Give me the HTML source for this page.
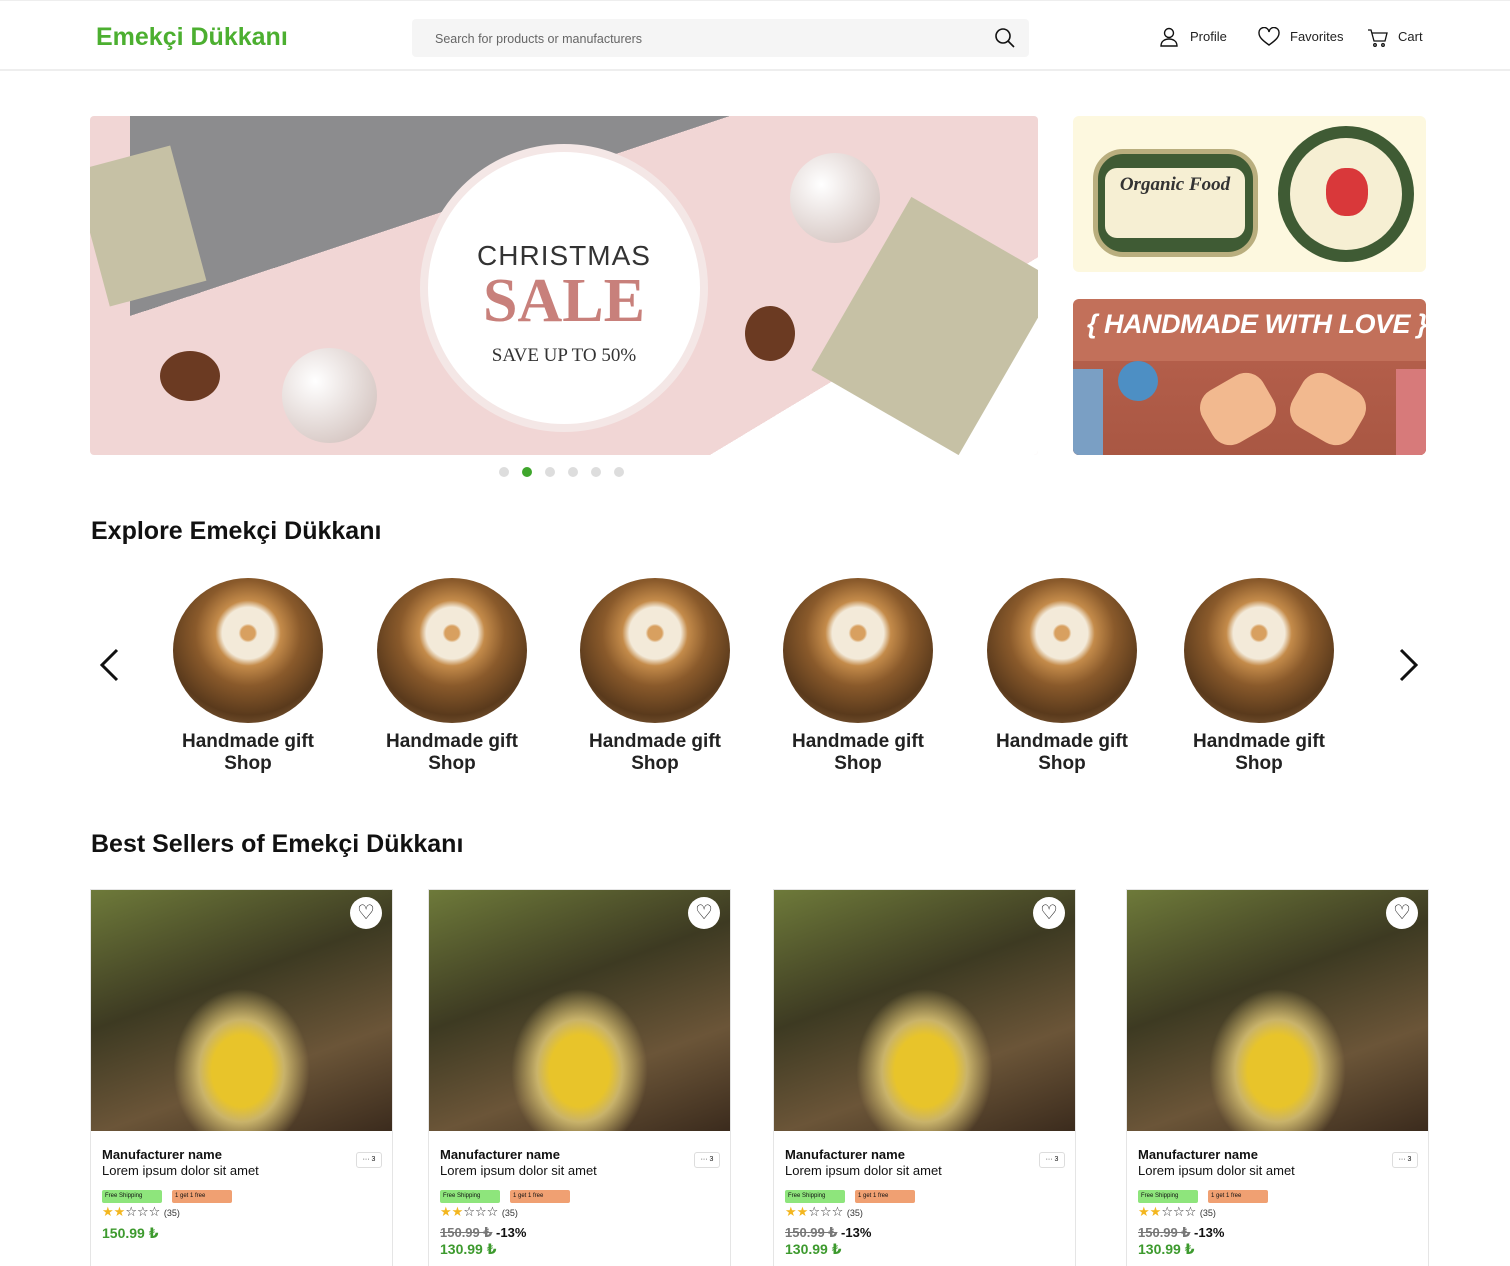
<!DOCTYPE html>
<html><head><meta charset="utf-8"><style>
*{box-sizing:border-box;margin:0;padding:0}
body{width:1510px;height:1266px;overflow:hidden;background:#fff;font-family:"Liberation Sans","DejaVu Sans",sans-serif;color:#111;position:relative}
.hdr{position:absolute;top:0;left:0;width:1510px;height:71px;border-top:1px solid #eee;border-bottom:2px solid #eee}
.logo{position:absolute;left:96px;top:22px;font-size:25px;font-weight:bold;color:#4caf30}
.search{position:absolute;left:412px;top:18px;width:617px;height:38px;background:#f5f5f5;border-radius:4px}
.search span{position:absolute;left:23px;top:13px;font-size:12.5px;color:#666}
.nav{position:absolute;top:28px;font-size:13px;color:#222}
.banner{position:absolute;left:90px;top:116px;width:948px;height:339px;background:#f1d6d5;overflow:hidden;border-radius:4px}
.circ{position:absolute;left:330px;top:28px;width:288px;height:288px;border-radius:50%;background:#fff;border:8px solid #f4e7e6}
.side1{position:absolute;left:1073px;top:116px;width:353px;height:156px;background:#fdf8df;border-radius:6px}
.side2{position:absolute;left:1073px;top:299px;width:353px;height:156px;background:#c2705a;border-radius:6px;overflow:hidden}
.dots{position:absolute;top:464px;left:499px}
.dots i{display:inline-block;width:10px;height:10px;border-radius:50%;background:#ddd;margin-right:13px}
h2{position:absolute;left:91px;font-size:25px;font-weight:bold}
.cat{position:absolute;top:578px;width:150px;text-align:center}
.cat .img{width:150px;height:145px;border-radius:50%;background:radial-gradient(circle at 50% 38%,#d8a060 0 6%,#f3ead9 8% 22%,#c48b4a 28%,#8a5a2b 45%,#5a3a1c 70%,#a27a4f 100%)}
.cat p{font-size:19px;font-weight:bold;line-height:22px;margin-top:8px;color:#222;margin-left:-20px;margin-right:-20px}
.card{position:absolute;top:889px;width:303px;height:377px;border:1px solid #e5e5e5;border-bottom:none;overflow:hidden}
.card .img{height:241px;background:radial-gradient(ellipse at 50% 75%,#e8c42a 0 14%,#c9b36a 20%,transparent 32%),linear-gradient(160deg,#6e7a3a,#3d3a22 40%,#6b5538 70%,#3b2b1d)}
.heart{position:absolute;top:7px;right:10px;width:32px;height:32px;border-radius:50%;background:#fff;text-align:center;font-size:20px;line-height:32px}
.info{padding:16px 11px;font-size:13px;line-height:16px}
.tags{margin-top:6px;height:14px}
.tag{display:inline-block;font-size:6px;height:13px;line-height:13px;padding:0 3px;border-radius:2px;margin-right:10px;width:60px}
.stars{font-size:13px;margin-top:5px;color:#f3b61f}
.price{color:#3d9a2e;font-weight:bold;font-size:14px;margin-top:4px}
.more{position:absolute;right:10px;top:262px;width:26px;height:16px;border:1px solid #ddd;border-radius:3px;font-size:7px;text-align:center;line-height:14px}
</style></head><body>
<div class="hdr">
<div class="logo">Emekçi Dükkanı</div>
<div class="search"><span>Search for products or manufacturers</span>
<svg style="position:absolute;left:583px;top:9px" width="20" height="20" viewBox="0 0 20 20"><circle cx="8" cy="8" r="7" fill="none" stroke="#111" stroke-width="1.6"/><path d="M13 13l6 6" stroke="#111" stroke-width="1.6"/></svg></div>
<svg style="position:absolute;left:1159px;top:26px" width="20" height="20" viewBox="0 0 20 20" fill="none" stroke="#111" stroke-width="1.4"><circle cx="10" cy="6" r="4.5"/><path d="M2 19c0-5 4-7 8-7s8 2 8 7z"/></svg>
<div class="nav" style="left:1190px">Profile</div>
<svg style="position:absolute;left:1258px;top:26px" width="22" height="20" viewBox="0 0 22 20" fill="none" stroke="#111" stroke-width="1.4"><path d="M11 18C4 13 1 10 1 6a5 5 0 0 1 10-1 5 5 0 0 1 10 1c0 4-3 7-10 12z"/></svg>
<div class="nav" style="left:1290px">Favorites</div>
<svg style="position:absolute;left:1367px;top:27px" width="22" height="20" viewBox="0 0 22 20" fill="none" stroke="#111" stroke-width="1.3"><path d="M1 2h3l3 11h11l2-8H5"/><circle cx="8" cy="17" r="1.3"/><circle cx="16" cy="17" r="1.3"/></svg>
<div class="nav" style="left:1398px">Cart</div>
</div>

<div class="banner">
<div style="position:absolute;left:0;top:0;width:948px;height:339px;background:linear-gradient(to bottom right,#8c8c8e 0 50%,transparent 50%) 40px 0/600px 200px no-repeat"></div>
<div style="position:absolute;left:620px;top:140px;width:330px;height:199px;background:linear-gradient(to top left,#fff 0 50%,transparent 50%)"></div>
<div style="position:absolute;left:0;top:40px;width:100px;height:140px;background:#c6c1a5;transform:rotate(-15deg)"></div>
<div style="position:absolute;left:760px;top:110px;width:170px;height:200px;background:#c6c1a5;transform:rotate(30deg)"></div>
<div style="position:absolute;left:192px;top:232px;width:95px;height:95px;border-radius:50%;background:radial-gradient(circle at 35% 35%,#fff,#cbb8b3)"></div>
<div style="position:absolute;left:700px;top:37px;width:90px;height:90px;border-radius:50%;background:radial-gradient(circle at 35% 35%,#fff,#cbb8b3)"></div>
<div style="position:absolute;left:70px;top:235px;width:60px;height:50px;border-radius:50%;background:#6b3a22"></div>
<div style="position:absolute;left:655px;top:190px;width:50px;height:55px;border-radius:50%;background:#6b3a22"></div>
<div class="circ">
<div style="position:absolute;width:100%;top:88px;text-align:center;font-size:28px;color:#333;letter-spacing:1px">CHRISTMAS</div>
<div style="position:absolute;width:100%;top:114px;text-align:center;font-size:62px;font-family:'Liberation Serif',serif;color:#c8807b;font-weight:bold">SALE</div>
<div style="position:absolute;width:100%;top:193px;text-align:center;font-size:19px;font-family:'Liberation Serif',serif;color:#333">SAVE UP TO 50%</div>
</div>
</div>
<div class="side1">
<div style="position:absolute;left:20px;top:33px;width:165px;height:108px;border-radius:30px;background:#3f5b34;border:5px solid #b9ae7e"></div>
<div style="position:absolute;left:32px;top:52px;width:140px;height:70px;border-radius:12px;background:#f6efd3;text-align:center;font:italic bold 19px 'Liberation Serif',serif;color:#333;padding-top:6px">Organic Food</div>
<div style="position:absolute;left:205px;top:10px;width:136px;height:136px;border-radius:50%;background:#3f5b34"></div>
<div style="position:absolute;left:217px;top:22px;width:112px;height:112px;border-radius:50%;background:#f6efd3"></div>
<div style="position:absolute;left:253px;top:52px;width:42px;height:48px;border-radius:45%;background:#d9383a"></div>
</div>
<div class="side2">
<div style="position:absolute;left:14px;top:10px;font:italic bold 27px 'Liberation Sans',sans-serif;color:#fff;white-space:nowrap;letter-spacing:-0.5px">{ HANDMADE WITH LOVE }</div>
<div style="position:absolute;left:0;top:62px;width:353px;height:94px;background:linear-gradient(#b35e4a,#a95743)"></div>
<div style="position:absolute;left:130px;top:80px;width:70px;height:60px;background:#f2b98f;transform:rotate(-30deg);border-radius:20px"></div>
<div style="position:absolute;left:220px;top:80px;width:70px;height:60px;background:#f2b98f;transform:rotate(30deg);border-radius:20px"></div>
<div style="position:absolute;left:45px;top:62px;width:40px;height:40px;border-radius:50%;background:#4d8fc4"></div>
<div style="position:absolute;left:0;top:70px;width:30px;height:86px;background:#7a9fc4"></div>
<div style="position:absolute;left:323px;top:70px;width:30px;height:86px;background:#d77a7a"></div>
</div>
<div class="dots"><i></i><i style="background:#3fa62c"></i><i></i><i></i><i></i><i></i></div>

<h2 style="top:517px">Explore Emekçi Dükkanı</h2>
<svg style="position:absolute;left:98px;top:648px" width="24" height="34" viewBox="0 0 24 34" fill="none" stroke="#111" stroke-width="3"><path d="M19 2L4 17l15 15"/></svg>
<svg style="position:absolute;left:1396px;top:648px" width="24" height="34" viewBox="0 0 24 34" fill="none" stroke="#111" stroke-width="3"><path d="M5 2l15 15L5 32"/></svg>
<div class="cat" style="left:173px"><div class="img"></div><p>Handmade gift<br>Shop</p></div>
<div class="cat" style="left:377px"><div class="img"></div><p>Handmade gift<br>Shop</p></div>
<div class="cat" style="left:580px"><div class="img"></div><p>Handmade gift<br>Shop</p></div>
<div class="cat" style="left:783px"><div class="img"></div><p>Handmade gift<br>Shop</p></div>
<div class="cat" style="left:987px"><div class="img"></div><p>Handmade gift<br>Shop</p></div>
<div class="cat" style="left:1184px"><div class="img"></div><p>Handmade gift<br>Shop</p></div>

<h2 style="top:830px">Best Sellers of Emekçi Dükkanı</h2>

<div class="card" style="left:90px"><div class="img"></div><div class="heart">♡</div><div class="more">··· 3</div>
<div class="info"><b>Manufacturer name</b><br>Lorem ipsum dolor sit amet
<div class="tags"><span class="tag" style="background:#8ee57c">Free Shipping</span><span class="tag" style="background:#f0a072">1 get 1 free</span></div>
<div class="stars">★★<span style="color:#333">☆☆☆</span> <span style="font-size:9px;color:#333">(35)</span></div>
<div class="price">150.99 ₺</div></div></div>

<div class="card" style="left:428px"><div class="img"></div><div class="heart">♡</div><div class="more">··· 3</div>
<div class="info"><b>Manufacturer name</b><br>Lorem ipsum dolor sit amet
<div class="tags"><span class="tag" style="background:#8ee57c">Free Shipping</span><span class="tag" style="background:#f0a072">1 get 1 free</span></div>
<div class="stars">★★<span style="color:#333">☆☆☆</span> <span style="font-size:9px;color:#333">(35)</span></div>
<div style="font-size:13px;font-weight:bold;margin-top:4px"><s style="color:#777">150.99 ₺</s> -13%</div><div class="price" style="margin-top:0">130.99 ₺</div></div></div>

<div class="card" style="left:773px"><div class="img"></div><div class="heart">♡</div><div class="more">··· 3</div>
<div class="info"><b>Manufacturer name</b><br>Lorem ipsum dolor sit amet
<div class="tags"><span class="tag" style="background:#8ee57c">Free Shipping</span><span class="tag" style="background:#f0a072">1 get 1 free</span></div>
<div class="stars">★★<span style="color:#333">☆☆☆</span> <span style="font-size:9px;color:#333">(35)</span></div>
<div style="font-size:13px;font-weight:bold;margin-top:4px"><s style="color:#777">150.99 ₺</s> -13%</div><div class="price" style="margin-top:0">130.99 ₺</div></div></div>

<div class="card" style="left:1126px"><div class="img"></div><div class="heart">♡</div><div class="more">··· 3</div>
<div class="info"><b>Manufacturer name</b><br>Lorem ipsum dolor sit amet
<div class="tags"><span class="tag" style="background:#8ee57c">Free Shipping</span><span class="tag" style="background:#f0a072">1 get 1 free</span></div>
<div class="stars">★★<span style="color:#333">☆☆☆</span> <span style="font-size:9px;color:#333">(35)</span></div>
<div style="font-size:13px;font-weight:bold;margin-top:4px"><s style="color:#777">150.99 ₺</s> -13%</div><div class="price" style="margin-top:0">130.99 ₺</div></div></div>
</body></html>
